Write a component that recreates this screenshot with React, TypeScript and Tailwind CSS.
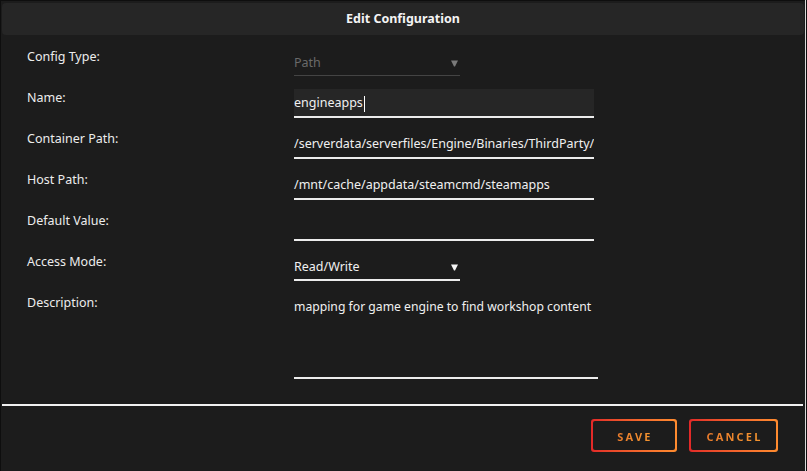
import React from "react";

const font = { fontFamily: '"Noto Sans", "Open Sans", Arial, sans-serif' };

function Row({ label, children, h = "h-[41px]" }: { label: string; children: React.ReactNode; h?: string }) {
  return (
    <div className={`flex ${h}`}>
      <div className="w-[267px] shrink-0 pt-[1px] text-[12.5px] leading-[16px] text-[#ececec]">{label}</div>
      <div className="flex-1">{children}</div>
    </div>
  );
}

function Arrow({ color }: { color: string }) {
  return (
    <svg width="7" height="7" viewBox="0 0 7 7" className="mr-[2px]">
      <path d="M0 0.5 H7 L4 6.5 H3 Z" fill={color} />
    </svg>
  );
}

function GradButton({ label, w }: { label: string; w: string }) {
  return (
    <div className={`${w} h-[33px] rounded-[3px] bg-gradient-to-r from-[#e22828] to-[#ff8c2f] p-[2px]`}>
      <div className="flex h-full w-full items-center justify-center rounded-[2px] bg-[#1c1c1c] pt-[2px]">
        <span className="bg-gradient-to-r from-[#ea7a2c] to-[#f4952f] bg-clip-text pl-[2px] text-[11px] font-bold leading-[14px] tracking-[2.2px] text-transparent">
          {label}
        </span>
      </div>
    </div>
  );
}

export default function App() {
  return (
    <div className="flex h-[471px] w-[807px] bg-[#1c1c1c]" style={font}>
      <div className="flex w-[805px] flex-col border-l border-t border-[#0e0e0e] pl-[1px] pr-[1px] pt-[2px]">
        <div className="flex h-[32px] shrink-0 items-center justify-center rounded-[4px] bg-[#262626]">
          <span className="text-[12.5px] font-bold text-[#f4f4f4]">Edit Configuration</span>
        </div>
        <div className="h-[369px] shrink-0 pl-[25px] pt-[13px]">
          <Row label="Config Type:">
            <div className="flex h-[28px] w-[166px] items-center justify-between border-b border-[#444444] pt-[3px]">
              <span className="text-[12.5px] text-[#6a6a6a]">Path</span>
              <Arrow color="#7a7a7a" />
            </div>
          </Row>
          <Row label="Name:">
            <div className="flex h-[29px] w-[300px] items-center border-b-2 border-[#ececec] bg-[#262626] pt-[2px]">
              <span className="text-[12.5px] text-[#f0f0f0]">engineapps</span>
              <span className="ml-[1px] inline-block h-[16px] w-[1px] bg-white" />
            </div>
          </Row>
          <Row label="Container Path:">
            <div className="flex h-[29px] w-[300px] items-center overflow-hidden whitespace-nowrap border-b-2 border-[#ececec] pt-[2px]">
              <span className="text-[12.5px] text-[#f0f0f0]">/serverdata/serverfiles/Engine/Binaries/ThirdParty/Steamworks</span>
            </div>
          </Row>
          <Row label="Host Path:">
            <div className="flex h-[29px] w-[300px] items-center border-b-2 border-[#ececec] pt-[2px]">
              <span className="text-[12.5px] text-[#f0f0f0]">/mnt/cache/appdata/steamcmd/steamapps</span>
            </div>
          </Row>
          <Row label="Default Value:">
            <div className="h-[29px] w-[300px] border-b-2 border-[#ececec]" />
          </Row>
          <Row label="Access Mode:">
            <div className="flex h-[28px] w-[166px] items-center justify-between border-b-2 border-[#ececec] pt-[2px]">
              <span className="text-[12.5px] text-[#f0f0f0]">Read/Write</span>
              <Arrow color="#f4f4f4" />
            </div>
          </Row>
          <Row label="Description:" h="h-[90px]">
            <div className="h-[85px] w-[304px] whitespace-nowrap border-b-2 border-[#ececec] pt-[4px] text-[12.2px] leading-[17px] text-[#f0f0f0]">
              mapping for game engine to find workshop content
            </div>
          </Row>
        </div>
        <div className="mr-[1px] h-[2px] shrink-0 bg-[#f0f0f0]" />
        <div className="flex justify-end gap-[12px] pr-[26px] pt-[13px]">
          <GradButton label="SAVE" w="w-[86px]" />
          <GradButton label="CANCEL" w="w-[89px]" />
        </div>
      </div>
      <div className="w-[1px] bg-[#d8d8d8]" />
      <div className="w-[1px] bg-[#0e0e0e]" />
    </div>
  );
}
